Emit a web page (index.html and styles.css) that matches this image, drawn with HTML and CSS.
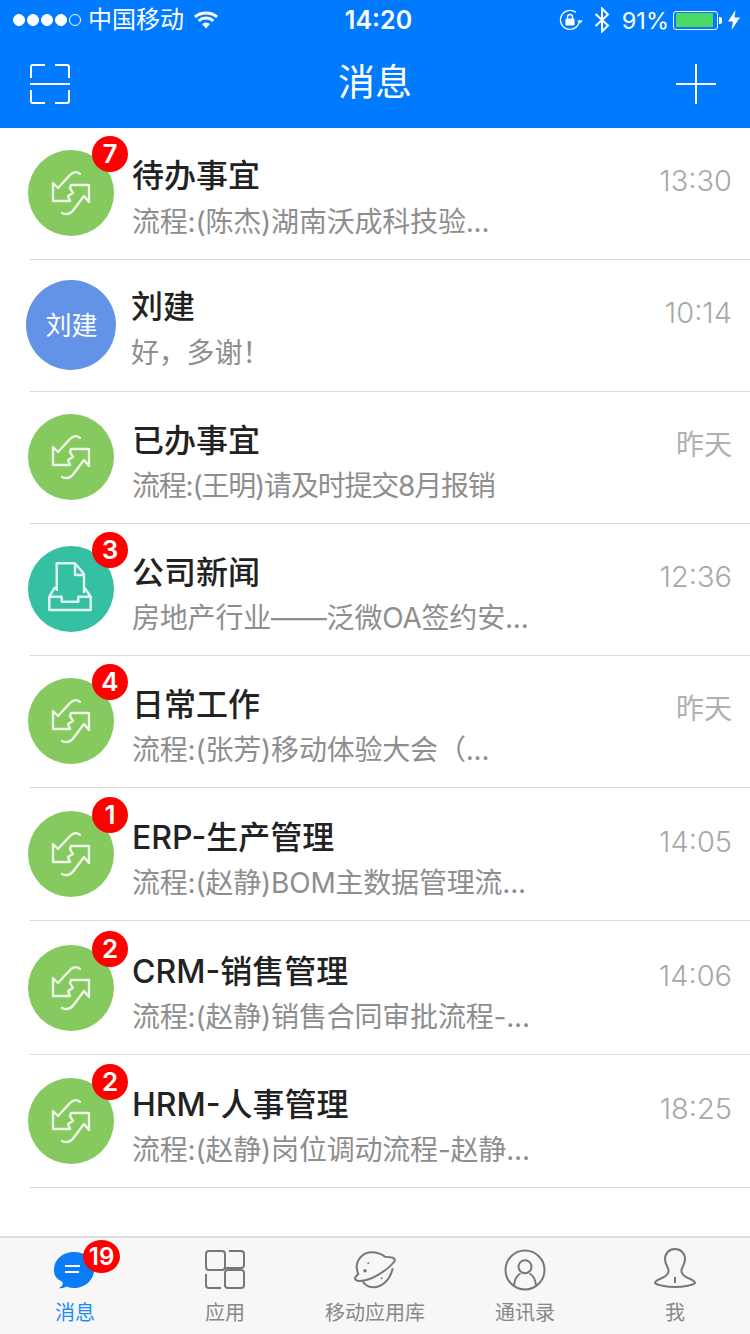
FILE: index.html
```html
<!DOCTYPE html>
<html lang="zh-CN">
<head>
<meta charset="utf-8">
<title>消息</title>
<link rel="stylesheet" href="styles.css">
</head>
<body>
<svg class="defs" width="0" height="0" aria-hidden="true">
  <symbol id="flow" viewBox="0 0 86 86">
    <path d="M52 24C49 21 45 22 42 25L30 38L25 33V51H42L40 46L45 43L42 38L43 35H61V52L56 46L47 58C43 64 38 65 34 63" fill="none" stroke="#fff" stroke-width="2.400" stroke-linecap="round" stroke-linejoin="round" opacity=".85"/>
  </symbol>
  <symbol id="inbox" viewBox="0 0 86 86">
    <path d="M28.700 45V17.300H47L56 28V47M47 17.300V29H56M27 41L21.300 50.700V64H62.700V50.700L56 41M21.300 50.700H33.700V55.700H50.300V50.700H62.700" fill="none" stroke="#fff" stroke-width="2.400" stroke-linejoin="round" opacity=".85"/>
  </symbol>
</svg>
<div class="phone">
  <header class="top">
    <div class="status">
      <div class="status-left">
        <span class="signal"><i></i><i></i><i></i><i></i><i class="off"></i></span>
        <span class="carrier">中国移动</span>
        <svg class="wifi" width="24" height="18" viewBox="0 0 24 18"><path d="M1 6C7 .8 17 .8 23 6M4.700 9.800C9 6.200 15 6.200 19.300 9.800" fill="none" stroke="#fff" stroke-width="3"/><path d="M8 13C10.500 11 13.500 11 16 13L12 17.500Z" fill="#fff"/></svg>
      </div>
      <span class="clock">14:20</span>
      <div class="status-right">
        <svg class="rotlock" width="24" height="22" viewBox="0 0 24 22"><path d="M20.500 11A9.500 9.500 0 1 1 17 3.500" fill="none" stroke="#fff" stroke-width="1.300"/><path d="M18 11.500H24L21 14.500Z" fill="#fff"/><rect x="6.500" y="9.500" width="9" height="7" rx="1" fill="#fff"/><path d="M8.500 9.500V8A2.500 2.500 0 0 1 13.500 8V9.500" fill="none" stroke="#fff" stroke-width="1.300"/></svg>
        <svg class="bt" width="16" height="26" viewBox="0 0 16 26"><path d="M1.500 7L14 18.500L8 24.500V1.500L14 7.500L1.500 19" fill="none" stroke="#fff" stroke-width="2"/></svg>
        <span class="pct">91%</span>
        <span class="battery"><span class="battery-fill"></span></span>
        <span class="nub"></span>
        <svg class="bolt" width="12" height="20" viewBox="0 0 12 20"><path d="M7.500 0L0 11.500H5L3.500 20L12 7.500H6.500Z" fill="#fff"/></svg>
      </div>
    </div>
    <nav class="nav">
      <svg width="40" height="40" viewBox="0 0 40 40"><path d="M15 1H3A2 2 0 0 0 1 3V14M25 1H37A2 2 0 0 1 39 3V14M0 20H40M1 26V37A2 2 0 0 0 3 39H15M39 26V37A2 2 0 0 1 37 39H25" fill="none" stroke="#fff" stroke-width="2"/></svg>
      <h1 class="nav-title">消息</h1>
      <svg width="40" height="40" viewBox="0 0 40 40"><path d="M20 0V40M0 20H40" fill="none" stroke="#fff" stroke-width="2"/></svg>
    </nav>
  </header>

  <main class="list">
    <div class="row">
      <div class="avatar green"><svg width="86" height="86"><use href="#flow"/></svg><b class="badge">7</b></div>
      <div class="body body-first"><div class="title">待办事宜</div><div class="sub sub-low">流程:(陈杰)湖南沃成科技验...</div></div>
      <span class="time">13:30</span>
    </div>
    <div class="row">
      <div class="avatar person">刘建</div>
      <div class="body body-high"><div class="title">刘建</div><div class="sub sub-low">好，多谢！</div></div>
      <span class="time">10:14</span>
    </div>
    <div class="row">
      <div class="avatar green"><svg width="86" height="86"><use href="#flow"/></svg></div>
      <div class="body"><div class="title">已办事宜</div><div class="sub sub-tight">流程:(王明)请及时提交8月报销</div></div>
      <span class="time time-cjk">昨天</span>
    </div>
    <div class="row">
      <div class="avatar teal"><svg width="86" height="86"><use href="#inbox"/></svg><b class="badge">3</b></div>
      <div class="body"><div class="title">公司新闻</div><div class="sub">房地产行业——泛微OA签约安...</div></div>
      <span class="time">12:36</span>
    </div>
    <div class="row">
      <div class="avatar green"><svg width="86" height="86"><use href="#flow"/></svg><b class="badge">4</b></div>
      <div class="body"><div class="title">日常工作</div><div class="sub">流程:(张芳)移动体验大会（...</div></div>
      <span class="time time-cjk">昨天</span>
    </div>
    <div class="row row-tall">
      <div class="avatar green"><svg width="86" height="86"><use href="#flow"/></svg><b class="badge">1</b></div>
      <div class="body"><div class="title">ERP-生产管理</div><div class="sub">流程:(赵静)BOM主数据管理流...</div></div>
      <span class="time">14:05</span>
    </div>
    <div class="row row-taller">
      <div class="avatar green"><svg width="86" height="86"><use href="#flow"/></svg><b class="badge">2</b></div>
      <div class="body"><div class="title">CRM-销售管理</div><div class="sub">流程:(赵静)销售合同审批流程-...</div></div>
      <span class="time">14:06</span>
    </div>
    <div class="row row-tall">
      <div class="avatar green"><svg width="86" height="86"><use href="#flow"/></svg><b class="badge">2</b></div>
      <div class="body"><div class="title">HRM-人事管理</div><div class="sub">流程:(赵静)岗位调动流程-赵静...</div></div>
      <span class="time">18:25</span>
    </div>
  </main>

  <footer class="tabs">
    <div class="tab active">
      <div class="tab-icon">
        <svg width="50" height="50" viewBox="0 0 50 50"><path d="M5 44C9 42 9 40 8.500 38C3 35 0 32 0 26C0 15 9 8 20 8C31 8 40 15 40 26C40 36 31 44 20 44C16 44 14 43 12.500 42.500C10 44 8 44.500 5 44Z" fill="#0a7cf5" transform="translate(4 0)"/><path d="M15 22H30M15 28H29" stroke="#fff" stroke-width="2" fill="none"/></svg>
        <b class="tab-badge">19</b>
      </div>
      <span class="tab-label">消息</span>
    </div>
    <div class="tab">
      <div class="tab-icon">
        <svg width="50" height="50" viewBox="0 0 50 50" fill="none" stroke="#777" stroke-width="2"><rect x="6" y="7" width="19" height="19" rx="3"/><path d="M29 7H41A3 3 0 0 1 44 10V21A3 3 0 0 1 41 24H25"/><path d="M6 30V41A3 3 0 0 0 9 44H21"/><rect x="25" y="26" width="19" height="18" rx="3"/></svg>
      </div>
      <span class="tab-label">应用</span>
    </div>
    <div class="tab">
      <div class="tab-icon">
        <svg width="50" height="50" viewBox="0 0 50 50" fill="none" stroke="#777" stroke-width="2" stroke-linecap="round"><path d="M35 12.700C30 9 26 8.300 21.700 8.300C13 8.300 6.700 15 6.700 23.300C6.700 26 7.500 28 8.300 30L5.500 33C4 35 6 37 10 37C16 37 22 34.500 26.700 31.700C34 27.500 40 23 44 18C46 15.500 44 13.500 40 13.300C38 13.200 36 12.800 35 12.700Z"/><path d="M13.300 38.300C16 41.500 19.500 43.300 23.300 43.300C32 43.300 40 36 42.500 25"/><circle cx="15" cy="26.700" r="1.700" fill="#777" stroke="none"/><circle cx="18.300" cy="19.300" r="1" fill="#777" stroke="none"/><circle cx="31.700" cy="34.300" r="1" fill="#777" stroke="none"/></svg>
      </div>
      <span class="tab-label">移动应用库</span>
    </div>
    <div class="tab">
      <div class="tab-icon">
        <svg width="50" height="50" viewBox="0 0 50 50" fill="none" stroke="#777" stroke-width="2"><circle cx="25" cy="26" r="19.500"/><circle cx="25" cy="22.700" r="6.500"/><path d="M14 41.500C14.500 35.500 17 31.500 20.500 29.500M36 41.500C35.500 35.500 33 31.500 29.500 29.500"/></svg>
      </div>
      <span class="tab-label">通讯录</span>
    </div>
    <div class="tab">
      <div class="tab-icon">
        <svg width="50" height="50" viewBox="0 0 50 50" fill="none" stroke="#777" stroke-width="2" stroke-linejoin="round"><path d="M25 5C19 5 15 9.500 15 15C15 20 18 23 18.500 26C19 30 17 32 12 34C8 35.500 5 37 5 39C7 41 16 43 25 43C34 43 43 41 45 39C45 37 42 35.500 38 34C33 32 31 30 31.500 26C32 23 35 20 35 15C35 9.500 31 5 25 5Z"/><path d="M25 33V39"/></svg>
      </div>
      <span class="tab-label">我</span>
    </div>
  </footer>
</div>
</body>
</html>
```

FILE: styles.css
```css
* { box-sizing: border-box; }
html, body { margin: 0; padding: 0; }
body {
  width: 750px;
  height: 1334px;
  overflow: hidden;
  background: #fff;
  font-family: Inter, "Noto Sans CJK SC", "Liberation Sans", sans-serif;
}
.defs { display: block; width: 0; height: 0; }
.phone { display: flex; flex-direction: column; height: 1334px; }

/* header */
.top { background: #007aff; color: #fff; }
.status {
  display: grid;
  grid-template-columns: 1fr auto 1fr;
  align-items: center;
  height: 40px;
  padding: 0 10px 0 13px;
}
.status-left, .status-right { display: flex; align-items: center; }
.status-right { justify-content: flex-end; }
.signal { display: flex; gap: 2px; }
.signal i {
  width: 12px; height: 12px; border-radius: 50%;
  background: #fff; border: 1px solid #fff;
}
.signal i.off { background: transparent; }
.carrier { font-size: 24px; line-height: 40px; margin-left: 7px; }
.wifi { margin-left: 10px; }
.clock { font-size: 25px; font-weight: 600; margin-left: 4px; }
.rotlock { margin-right: 11px; }
.bt { margin-right: 12px; }
.pct { font-size: 23.500px; margin-right: 4px; }
.battery {
  display: block; width: 45px; height: 19px; padding: 1.500px;
  border: 1px solid #fff; border-radius: 3px;
}
.battery-fill { display: block; width: 37px; height: 100%; background: #4cd964; }
.nub { width: 3px; height: 7px; margin-left: 1px; background: #fff; border-radius: 0 2px 2px 0; }
.bolt { margin-left: 6px; }

.nav {
  display: flex; justify-content: space-between; align-items: center;
  height: 88px; padding: 0 34px 0 30px;
}
.nav-title { margin: 0 0 2px 4px; font-size: 37px; font-weight: 400; line-height: 50px; }

/* list */
.list { flex: 1; }
.row {
  display: flex; align-items: flex-start;
  height: 132px; margin-left: 30px; padding: 22px 18px 0 0;
  border-bottom: 1px solid #d9d9d9;
}
.row-tall { height: 133px; padding-top: 23px; }
.row-taller { height: 134px; padding-top: 24px; }
.avatar {
  position: relative; flex: none;
  display: flex; align-items: center; justify-content: center;
  width: 86px; height: 86px; margin: 0 19px 0 -2px;
  border-radius: 50%; color: #fff;
}
.green { background: #85c95f; }
.teal { background: #35bfa3; }
.person {
  width: 90px; height: 90px; margin: -2px 16px 0 -4px; padding: 0 0 4px 1px;
  background: #6293e6; font-size: 26px;
}
.badge {
  position: absolute; left: 64px; top: -14px;
  width: 36px; height: 36px; border-radius: 50%;
  background: #f00; color: #fff;
  font: 600 26px/36px Inter, sans-serif; text-align: center;
}
.body { flex: 1; min-width: 0; margin: 5px 0 0 -1px; }
.body-first { margin-top: 4px; }
.body-high { margin-top: 3px; }
.title { font-size: 32px; font-weight: 500; line-height: 44px; color: #222; }
.sub {
  margin-top: 3px; font-size: 28px; line-height: 40px;
  letter-spacing: -.2px; color: #8e8e8e; white-space: nowrap;
}
.sub-low { margin-top: 4px; }
.sub-tight { letter-spacing: -1.200px; }
.time {
  flex: none; margin-top: 9px;
  font-size: 29px; font-weight: 300; line-height: 44px; color: #a8a8a8;
}
.time-cjk { font-size: 28px; font-weight: 400; color: #b0b0b0; }

/* tab bar */
.tabs {
  display: grid; grid-template-columns: repeat(5, 150px);
  height: 98px; background: #f7f7f7; border-top: 2px solid #dcdcdc;
}
.tab { display: flex; flex-direction: column; align-items: center; padding-top: 6px; }
.tab-icon { position: relative; width: 50px; height: 50px; }
.tab-icon svg { display: block; }
.tab-badge {
  position: absolute; left: 33px; top: -4px;
  width: 37px; height: 33px; border-radius: 50%;
  background: #f00; color: #fff;
  font: 600 24px/33px Inter, sans-serif; text-align: center;
}
.tab-label { margin-top: 5px; font-size: 20px; line-height: 28px; color: #888; }
.active .tab-label { color: #1a8cff; }
```
